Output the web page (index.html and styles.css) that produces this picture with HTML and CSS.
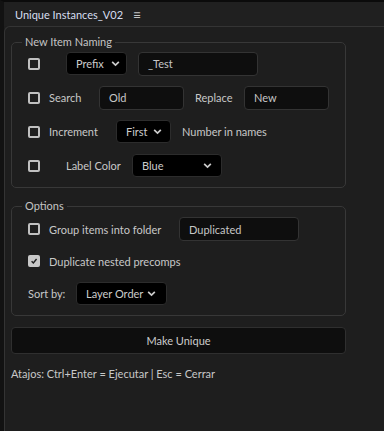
FILE: index.html
```html
<!DOCTYPE html>
<html>
<head>
<meta charset="utf-8">
<link rel="stylesheet" href="styles.css">
</head>
<body>
<div class="window">
  <div class="header">
    <span class="title">Unique Instances_V02</span>
    <span class="menu">&#8801;</span>
  </div>
  <div class="panel">
    <fieldset class="group naming">
      <legend>New Item Naming</legend>
      <div class="row">
        <span class="check"></span>
        <div class="select sel-prefix"><span>Prefix</span><svg class="chev" viewBox="0 0 10 6"><path d="M1 1 L5 5 L9 1"/></svg></div>
        <div class="input in-test">_Test</div>
      </div>
      <div class="row">
        <span class="check"></span>
        <span class="label lbl-search">Search</span>
        <div class="input in-old">Old</div>
        <span class="label lbl-replace">Replace</span>
        <div class="input in-new">New</div>
      </div>
      <div class="row">
        <span class="check"></span>
        <span class="label lbl-inc">Increment</span>
        <div class="select sel-first"><span>First</span><svg class="chev" viewBox="0 0 10 6"><path d="M1 1 L5 5 L9 1"/></svg></div>
        <span class="label lbl-num">Number in names</span>
      </div>
      <div class="row">
        <span class="check"></span>
        <span class="label lbl-color">Label Color</span>
        <div class="select sel-blue"><span>Blue</span><svg class="chev" viewBox="0 0 10 6"><path d="M1 1 L5 5 L9 1"/></svg></div>
      </div>
    </fieldset>
    <fieldset class="group options">
      <legend>Options</legend>
      <div class="row">
        <span class="check"></span>
        <span class="label lbl-group">Group items into folder</span>
        <div class="input in-dup">Duplicated</div>
      </div>
      <div class="row">
        <span class="check checked"><svg viewBox="0 0 10 10"><path d="M2 5.2 L4.2 7.4 L8.2 2.6"/></svg></span>
        <span class="label lbl-nested">Duplicate nested precomps</span>
      </div>
      <div class="row">
        <span class="label lbl-sort">Sort by:</span>
        <div class="select sel-order"><span>Layer Order</span><svg class="chev" viewBox="0 0 10 6"><path d="M1 1 L5 5 L9 1"/></svg></div>
      </div>
    </fieldset>
    <div class="button">Make Unique</div>
    <div class="hint">Atajos: Ctrl+Enter = Ejecutar | Esc = Cerrar</div>
  </div>
</div>
</body>
</html>
```

FILE: styles.css
```css
* { box-sizing: border-box; }
html, body { margin: 0; padding: 0; }
body {
  background: #1e1e1e;
  font-family: Lato, "Noto Sans", sans-serif;
  font-size: 11px;
  color: #c8c8c8;
  width: 384px;
  height: 431px;
  overflow: hidden;
}
.window {
  height: 431px;
  border-top: 2px solid #0b0b0b;
  border-left: 4px solid #121212;
  display: flex;
  flex-direction: column;
}
.header {
  height: 24px;
  display: flex;
  align-items: center;
  padding-left: 11px;
  background: #202020;
}
.title {
  color: #d6def0;
  font-size: 11px;
}
.menu {
  margin-left: 10px;
  color: #c4c4c4;
  font-size: 14px;
}
.panel {
  flex: 1;
  border-top: 1px solid #343434;
  border-left: 1px solid #343434;
  border-top-left-radius: 6px;
  padding: 8px 38px 0 6px;
}
.group {
  margin: 0;
  border: 1px solid #383838;
  border-radius: 5px;
  padding: 0 0 0 16px;
  min-width: 0;
  display: flex;
  flex-direction: column;
}
.group legend {
  padding: 0 3px;
  margin-left: -6px;
  color: #c4c4c4;
  line-height: 14px;
}
.naming { padding-top: 3px; padding-bottom: 10px; gap: 11px; }
.options { margin-top: 11px; padding-top: 4px; padding-bottom: 10px; gap: 8px; }
.row {
  display: flex;
  align-items: center;
  height: 23px;
}
.options .row { height: 24px; }
.check {
  width: 12px;
  height: 12px;
  border: 2px solid #c0c0c0;
  border-radius: 2px;
  flex: none;
  display: flex;
}
.check.checked {
  background: #c8c8c8;
  border-color: #c8c8c8;
}
.check svg { width: 8px; height: 8px; }
.check svg path { fill: none; stroke: #1e1e1e; stroke-width: 1.8; }
.label { white-space: nowrap; color: #c8c8c8; flex: none; }
.select {
  height: 23px;
  background: #000;
  border: 1px solid #2c2c2c;
  border-radius: 4px;
  display: flex;
  align-items: center;
  justify-content: space-between;
  padding: 0 7px 0 9px;
  color: #cccccc;
  flex: none;
}
.chev { width: 9px; height: 5px; overflow: visible; }
.chev path { fill: none; stroke: #cccccc; stroke-width: 2; }
.input {
  height: 24px;
  background: #0e0e0e;
  border: 1px solid #333;
  border-radius: 4px;
  display: flex;
  align-items: center;
  padding-left: 9px;
  color: #c6c6c6;
  flex: none;
}
.sel-prefix { margin-left: 26px; width: 61px; padding-right: 6px; }
.in-test { margin-left: 11px; width: 120px; }
.lbl-search { margin-left: 9px; width: 50px; }
.in-old { width: 85px; }
.lbl-replace { margin-left: 11px; width: 49px; }
.in-new { width: 85px; }
.lbl-inc { margin-left: 9px; width: 67px; }
.sel-first { width: 55px; padding-right: 8px; }
.lbl-num { margin-left: 11px; }
.lbl-color { margin-left: 26px; width: 66px; }
.sel-blue { width: 90px; padding-right: 9px; }
.lbl-group { margin-left: 9px; width: 130px; }
.in-dup { width: 120px; }
.lbl-nested { margin-left: 9px; }
.lbl-sort { width: 48px; }
.sel-order { width: 91px; padding-right: 10px; }
.button {
  margin-top: 11px;
  height: 27px;
  background: #0e0e0e;
  border: 1px solid #2f2f2f;
  border-radius: 4px;
  display: flex;
  align-items: center;
  justify-content: center;
  color: #cccccc;
}
.hint {
  margin-top: 13px;
  color: #c8c8c8;
}
```
